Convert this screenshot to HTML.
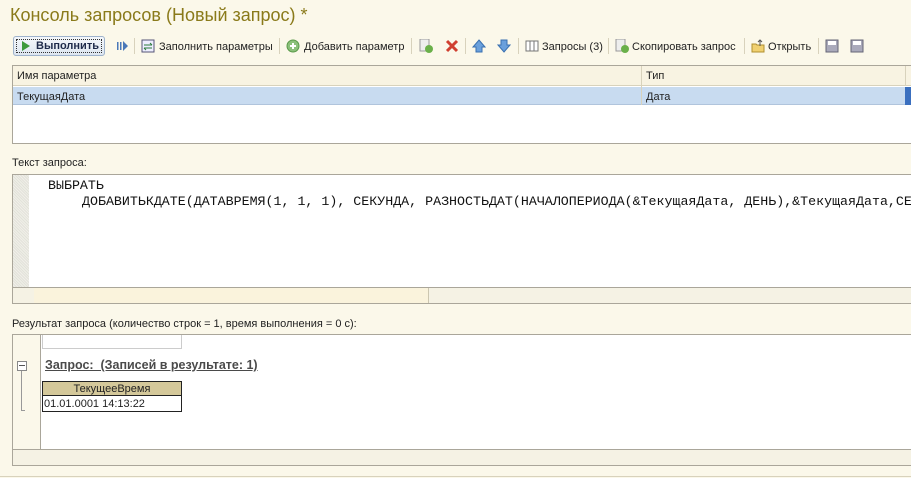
<!DOCTYPE html>
<html><head><meta charset="utf-8"><style>
*{margin:0;padding:0;box-sizing:border-box}
body{width:911px;height:478px;background:#fbf8ea;font-family:"Liberation Sans",sans-serif;font-size:11px;color:#222;position:relative;overflow:hidden}
.a{position:absolute;white-space:nowrap}
.sep{position:absolute;top:38px;width:1px;height:16px;background:#d8d2bc}
.ic{position:absolute;top:39px;width:14px;height:14px}
.mono{font-family:"Liberation Mono","Courier New",monospace;font-size:13.3px;color:#111}
</style></head><body>
<div class="a" style="left:10px;top:5px;font-size:18px;color:#8a7a1a">Консоль запросов (Новый запрос) *</div>

<div class="a" style="left:13px;top:36px;width:92px;height:20px;border:1px solid #9fb3cc;border-radius:3px;background:linear-gradient(#f4f7fb,#dde6f0)"></div>
<div class="a" style="left:16px;top:39px;width:86px;height:14px;border:1px dotted #333"></div>
<svg class="a" style="left:21px;top:41px" width="10" height="10"><path d="M1 0L9 5L1 10Z" fill="#3c9a3c"/></svg>
<div class="a" style="left:36px;top:40px;font-weight:bold;color:#1d2a4a">Выполнить</div>
<svg class="a" style="left:117px;top:40px" width="12" height="12"><rect x="0" y="2" width="1.5" height="8" fill="#4a78b8"/><rect x="3" y="2" width="1.5" height="8" fill="#4a78b8"/><path d="M6 1L11 6L6 11Z" fill="#4a78b8"/></svg>
<div class="sep" style="left:134px"></div>
<svg class="ic" style="left:141px"><rect x="1" y="1" width="12" height="12" fill="#eef" stroke="#557"/><path d="M3 6h8M9 4l2 2M11 9H3M5 11l-2-2" stroke="#2a7a3a" fill="none"/></svg>
<div class="a" style="left:159px;top:41px">Заполнить параметры</div>
<div class="sep" style="left:279px"></div>
<svg class="ic" style="left:286px"><circle cx="7" cy="7" r="6" fill="#8bc07a" stroke="#5a9a4a"/><path d="M7 4v6M4 7h6" stroke="#fff" stroke-width="2"/></svg>
<div class="a" style="left:304px;top:41px">Добавить параметр</div>
<div class="sep" style="left:411px"></div>
<svg class="ic" style="left:419px"><rect x="1" y="0" width="9" height="12" fill="#eee" stroke="#999"/><circle cx="10" cy="10" r="4" fill="#6ab04a"/></svg>
<svg class="ic" style="left:445px"><path d="M2 2L12 12M12 2L2 12" stroke="#d04030" stroke-width="3"/></svg>
<div class="sep" style="left:465px"></div>
<svg class="ic" style="left:472px"><path d="M7 1L13 8H10V13H4V8H1Z" fill="#6aa0dc" stroke="#3a70b0"/></svg>
<svg class="ic" style="left:497px"><path d="M7 13L13 6H10V1H4V6H1Z" fill="#6aa0dc" stroke="#3a70b0"/></svg>
<div class="sep" style="left:518px"></div>
<svg class="ic" style="left:525px"><rect x="1" y="2" width="12" height="10" fill="#fff" stroke="#777"/><path d="M5 2v10M9 2v10" stroke="#777"/></svg>
<div class="a" style="left:542px;top:41px">Запросы (3)</div>
<div class="sep" style="left:608px"></div>
<svg class="ic" style="left:615px"><rect x="1" y="0" width="9" height="12" fill="#eee" stroke="#999"/><circle cx="10" cy="10" r="4" fill="#6ab04a"/></svg>
<div class="a" style="left:632px;top:41px">Скопировать запрос</div>
<div class="sep" style="left:744px"></div>
<svg class="ic" style="left:751px"><path d="M1 5h4l1 1h7v7H1Z" fill="#f0d070" stroke="#b09030"/><path d="M9 1v6M7 3l2-2 2 2" stroke="#555" fill="none"/></svg>
<div class="a" style="left:768px;top:41px">Открыть</div>
<div class="sep" style="left:818px"></div>
<svg class="ic" style="left:825px"><rect x="1" y="1" width="12" height="12" fill="#aab" stroke="#667"/><rect x="3" y="2" width="8" height="4" fill="#fff"/></svg>
<svg class="ic" style="left:850px"><rect x="1" y="1" width="12" height="12" fill="#aab" stroke="#667"/><rect x="3" y="2" width="8" height="4" fill="#fff"/></svg>

<div class="a" style="left:12px;top:65px;width:900px;height:79px;border:1px solid #aaa69a;background:#fff"></div>
<div class="a" style="left:13px;top:66px;width:898px;height:20px;background:#f8f3e2;border-bottom:1px solid #d8d2bc"></div>
<div class="a" style="left:13px;top:87px;width:892px;height:18px;background:#c8dbf0;border-bottom:1px solid #b0c4dc"></div>
<div class="a" style="left:905px;top:87px;width:6px;height:18px;background:#3a6fbf"></div>
<div class="a" style="left:641px;top:66px;width:1px;height:39px;background:#d8d2bc"></div>
<div class="a" style="left:905px;top:66px;width:1px;height:20px;background:#d8d2bc"></div>
<div class="a" style="left:17px;top:70px">Имя параметра</div>
<div class="a" style="left:646px;top:70px">Тип</div>
<div class="a" style="left:17px;top:91px">ТекущаяДата</div>
<div class="a" style="left:646px;top:91px">Дата</div>

<div class="a" style="left:12px;top:157px">Текст запроса:</div>
<div class="a" style="left:12px;top:174px;width:900px;height:130px;border:1px solid #aaa69a;background:#fff"></div>
<div class="a" style="left:13px;top:175px;width:16px;height:112px;background:repeating-linear-gradient(45deg,#e2e2da 0 1px,#f0efe8 1px 2px)"></div>
<div class="a" style="left:13px;top:287px;width:898px;height:16px;background:#f5f2e4;border-top:1px solid #aaa69a"></div>
<div class="a" style="left:34px;top:288px;width:395px;height:15px;background:#faf3dc;border-right:1px solid #ccc6b0"></div>
<div class="a mono" style="left:48px;top:178px">ВЫБРАТЬ</div>
<div class="a mono" style="left:82px;top:194px">ДОБАВИТЬКДАТЕ(ДАТАВРЕМЯ(1, 1, 1), СЕКУНДА, РАЗНОСТЬДАТ(НАЧАЛОПЕРИОДА(&amp;ТекущаяДата, ДЕНЬ),&amp;ТекущаяДата,СЕ</div>

<div class="a" style="left:12px;top:318px">Результат запроса (количество строк = 1, время выполнения = 0 с):</div>
<div class="a" style="left:12px;top:334px;width:900px;height:132px;border:1px solid #aaa69a;background:#fff"></div>
<div class="a" style="left:13px;top:335px;width:28px;height:115px;background:#fbf8ea;border-right:1px solid #aaa69a"></div>
<div class="a" style="left:13px;top:449px;width:898px;height:16px;background:#f5f2e4;border-top:1px solid #aaa69a"></div>
<div class="a" style="left:42px;top:335px;width:140px;height:14px;border:1px solid #ccc;border-top:none"></div>
<div class="a" style="left:17px;top:361px;width:10px;height:10px;border:1px solid #888;background:#fff"></div>
<div class="a" style="left:19px;top:365px;width:6px;height:1px;background:#555"></div>
<div class="a" style="left:21px;top:371px;width:1px;height:40px;background:#999"></div>
<div class="a" style="left:21px;top:410px;width:4px;height:1px;background:#999"></div>
<div class="a" style="left:45px;top:358px;font-size:12.5px;font-weight:bold;color:#4a4a4a;text-decoration:underline">Запрос:&nbsp; (Записей в результате: 1)</div>
<div class="a" style="left:42px;top:381px;width:140px;height:31px;border:1px solid #222"></div>
<div class="a" style="left:43px;top:382px;width:138px;height:14px;background:#d4c89a;border-bottom:1px solid #222;text-align:center;line-height:14px">ТекущееВремя</div>
<div class="a" style="left:44px;top:398px">01.01.0001 14:13:22</div>
<div class="a" style="left:0;top:476px;width:911px;height:1px;background:#d8d2bc"></div>
</body></html>
